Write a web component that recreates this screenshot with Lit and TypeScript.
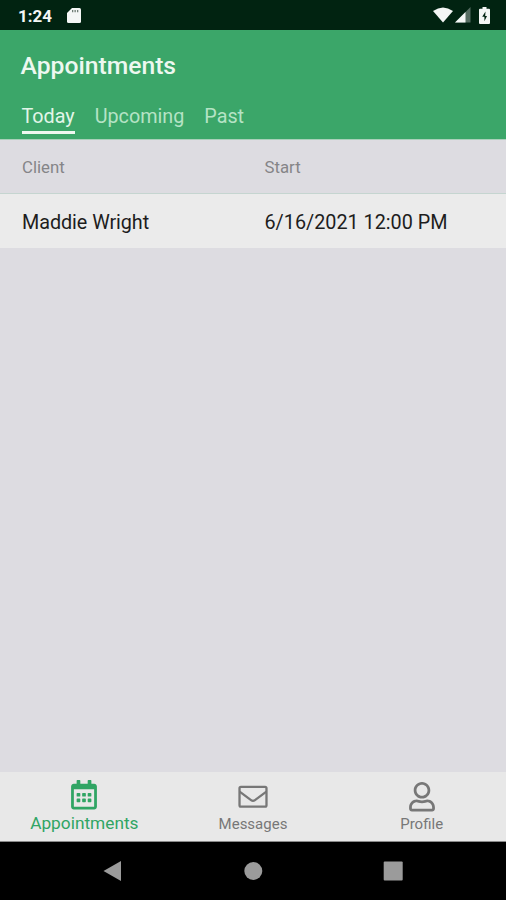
import { LitElement, html, css, svg } from "lit";
import { customElement, state } from "lit/decorators.js";
import { classMap } from "lit/directives/class-map.js";

const calendarIcon = svg`<path d="M148 288h-40c-6.6 0-12-5.4-12-12v-40c0-6.6 5.4-12 12-12h40c6.6 0 12 5.4 12 12v40c0 6.6-5.4 12-12 12zm108-12v-40c0-6.6-5.4-12-12-12h-40c-6.6 0-12 5.4-12 12v40c0 6.6 5.4 12 12 12h40c6.6 0 12-5.4 12-12zm96 0v-40c0-6.6-5.4-12-12-12h-40c-6.6 0-12 5.4-12 12v40c0 6.6 5.4 12 12 12h40c6.6 0 12-5.4 12-12zm-96 96v-40c0-6.6-5.4-12-12-12h-40c-6.6 0-12 5.4-12 12v40c0 6.6 5.4 12 12 12h40c6.6 0 12-5.4 12-12zm-96 0v-40c0-6.6-5.4-12-12-12h-40c-6.6 0-12 5.4-12 12v40c0 6.6 5.4 12 12 12h40c6.6 0 12-5.4 12-12zm192 0v-40c0-6.6-5.4-12-12-12h-40c-6.6 0-12 5.4-12 12v40c0 6.6 5.4 12 12 12h40c6.6 0 12-5.4 12-12zm96-260v352c0 26.500-21.500 48-48 48H48c-26.500 0-48-21.500-48-48V112c0-26.500 21.500-48 48-48h48V12c0-6.600 5.400-12 12-12h40c6.600 0 12 5.400 12 12v52h128V12c0-6.600 5.400-12 12-12h40c6.600 0 12 5.400 12 12v52h48c26.500 0 48 21.500 48 48zm-48 346V160H48v298c0 3.300 2.700 6 6 6h340c3.300 0 6-2.700 6-6z"/>`;
const envelopeIcon = svg`<g fill="none" stroke="currentColor" stroke-width="40" stroke-linejoin="round"><rect x="22" y="84" width="468" height="344" rx="24"/><path d="M24 168 222 315Q256 340 290 315L488 168"/></g>`;
const userIcon = svg`<path d="M313.6 304c-28.7 0-42.5 16-89.6 16-47.1 0-60.8-16-89.6-16C60.2 304 0 364.2 0 438.4V464c0 26.5 21.5 48 48 48h352c26.5 0 48-21.5 48-48v-25.6c0-74.2-60.2-134.4-134.4-134.4zM400 464H48v-25.6c0-47.6 38.8-86.4 86.4-86.4 14.6 0 38.3 16 89.6 16 51.7 0 74.9-16 89.6-16 47.6 0 86.4 38.8 86.4 86.4V464zM224 288c79.5 0 144-64.5 144-144S303.5 0 224 0 80 64.5 80 144s64.5 144 144 144zm0-240c52.9 0 96 43.1 96 96s-43.1 96-96 96-96-43.1-96-96 43.1-96 96-96z"/>`;

@customElement("status-bar")
class StatusBar extends LitElement {
  static styles = css`
    :host {
      display: flex;
      align-items: center;
      height: 30px;
      box-sizing: border-box;
      padding: 0 16px 0 18px;
      background: #012311;
      color: #f4f6f5;
    }
    .time {
      font-size: 17px;
      font-weight: 700;
      line-height: 20px;
      width: 49px;
      padding-top: 1px;
    }
    svg {
      display: block;
      fill: currentColor;
    }
    .right {
      display: flex;
      align-items: center;
      margin-left: auto;
    }
    .signal { margin-left: 2px; }
    .battery { margin-left: 8px; }
  `;
  render() {
    return html`
      <span class="time">1:24</span>
      <svg width="14" height="17" viewBox="0 0 14 17">
        <path d="M5 1h7.500Q14 1 14 2.500v12Q14 16 12.500 16h-11Q0 16 0 14.500V6Z"/>
        <path fill="#6f7d75" d="M5 3h1.300v2.200H5ZM7.500 3h1.300v2.200H7.500ZM10 3h1.300v2.200H10Z"/>
      </svg>
      <div class="right">
        <svg width="20" height="16" viewBox="0 0 20 16"><path d="M0 4Q10-3 20 4L10 15.500Z"/></svg>
        <svg class="signal" width="16" height="16" viewBox="0 0 16 16">
          <path opacity=".35" d="M15.500 0v15.500H0Z"/><path d="M10.500 5v10.500H0Z"/>
        </svg>
        <svg class="battery" width="11" height="17" viewBox="0 0 11 17">
          <path fill-rule="evenodd" d="M3.500 0h4v1.800H10Q11 1.800 11 2.800V16q0 1-1 1H1q-1 0-1-1V2.800q0-1 1-1h2.500ZM6.500 4.500 3.200 9.800h2.200v4.500L8 9H6.200Z"/>
        </svg>
      </div>
    `;
  }
}

@customElement("page-header")
class PageHeader extends LitElement {
  @state() private active = "Today";
  static styles = css`
    :host {
      display: block;
      height: 109px;
      box-sizing: border-box;
      padding: 20px 20.500px 0;
      background: #3ba669;
    }
    h1 {
      margin: 0;
      font-size: 24.700px;
      line-height: 32px;
      font-weight: 500;
      color: #edf8f0;
    }
    nav {
      display: flex;
      gap: 20px;
      margin: 20px 0 0 1px;
    }
    .tab {
      height: 32px;
      box-sizing: border-box;
      font-size: 19.750px;
      line-height: 29px;
      color: #b5e3c5;
      border-bottom: 3px solid transparent;
    }
    .active {
      color: #e2f5e8;
      border-color: #eef8f0;
    }
  `;
  render() {
    return html`
      <h1>Appointments</h1>
      <nav>
        ${["Today", "Upcoming", "Past"].map(
          (t) => html`<span class=${classMap({ tab: true, active: t === this.active })} @click=${() => (this.active = t)}>${t}</span>`
        )}
      </nav>
    `;
  }
}

@customElement("appointment-table")
class AppointmentTable extends LitElement {
  static styles = css`
    :host {
      display: block;
      background: #dddce1;
    }
    .row {
      display: grid;
      grid-template-columns: 242.500px 1fr;
      padding-left: 22px;
      box-sizing: border-box;
      align-items: center;
    }
    .head {
      height: 55px;
      border-top: 1px solid #a9d0ba;
      border-bottom: 1px solid #c5d5d0;
      font-size: 16.800px;
      color: #858588;
    }
    .item {
      height: 54px;
      padding-top: 2px;
      background: #ebebeb;
      font-size: 19.800px;
      color: #1d1d1d;
    }
    .name { letter-spacing: -0.06px; }
  `;
  render() {
    return html`
      <div class="row head"><span>Client</span><span>Start</span></div>
      <div class="row item"><span class="name">Maddie Wright</span><span>6/16/2021 12:00 PM</span></div>
    `;
  }
}

@customElement("tab-bar")
class TabBar extends LitElement {
  static styles = css`
    :host {
      display: grid;
      grid-template-columns: repeat(3, 1fr);
      height: 70px;
      background: #e8e8e8;
      box-sizing: border-box;
      border-bottom: 1px solid #8a8a8a;
    }
    .tab {
      display: flex;
      flex-direction: column;
      align-items: center;
      color: #777;
      font-size: 15px;
    }
    .active {
      color: #30a564;
      font-size: 17.300px;
    }
    svg {
      fill: currentColor;
      height: 29.500px;
      margin-top: 10px;
    }
    .active svg {
      margin-top: 8px;
    }
    .label {
      line-height: 20px;
      margin-top: 2px;
    }
    .active .label {
      margin-top: 3px;
    }
  `;
  render() {
    return html`
      <div class="tab active"><svg width="26" viewBox="0 0 448 512">${calendarIcon}</svg><span class="label">Appointments</span></div>
      <div class="tab"><svg width="30" viewBox="0 0 512 512">${envelopeIcon}</svg><span class="label">Messages</span></div>
      <div class="tab"><svg width="26" viewBox="0 0 448 512">${userIcon}</svg><span class="label">Profile</span></div>
    `;
  }
}

@customElement("system-nav")
class SystemNav extends LitElement {
  static styles = css`
    :host {
      display: grid;
      grid-template-columns: repeat(3, 140px);
      justify-content: center;
      justify-items: center;
      height: 58px;
      padding-top: 19px;
      box-sizing: border-box;
      background: #000;
    }
    svg { fill: #9b9b9b; }
  `;
  render() {
    return html`
      <svg width="20" height="20"><path d="M18 0v20L.5 10Z"/></svg>
      <svg width="20" height="20"><circle cx="10.300" cy="10" r="9"/></svg>
      <svg width="20" height="20"><rect x=".7" y=".5" width="19" height="19" rx="1"/></svg>
    `;
  }
}

@customElement("app-root")
class AppRoot extends LitElement {
  static styles = css`
    :host {
      display: flex;
      flex-direction: column;
      height: 900px;
      font-family: Roboto, "Liberation Sans", sans-serif;
      background: #dddce1;
    }
    .content { flex: 1; }
  `;
  render() {
    return html`
      <status-bar></status-bar>
      <page-header></page-header>
      <appointment-table class="content"></appointment-table>
      <tab-bar></tab-bar>
      <system-nav></system-nav>
    `;
  }
}
